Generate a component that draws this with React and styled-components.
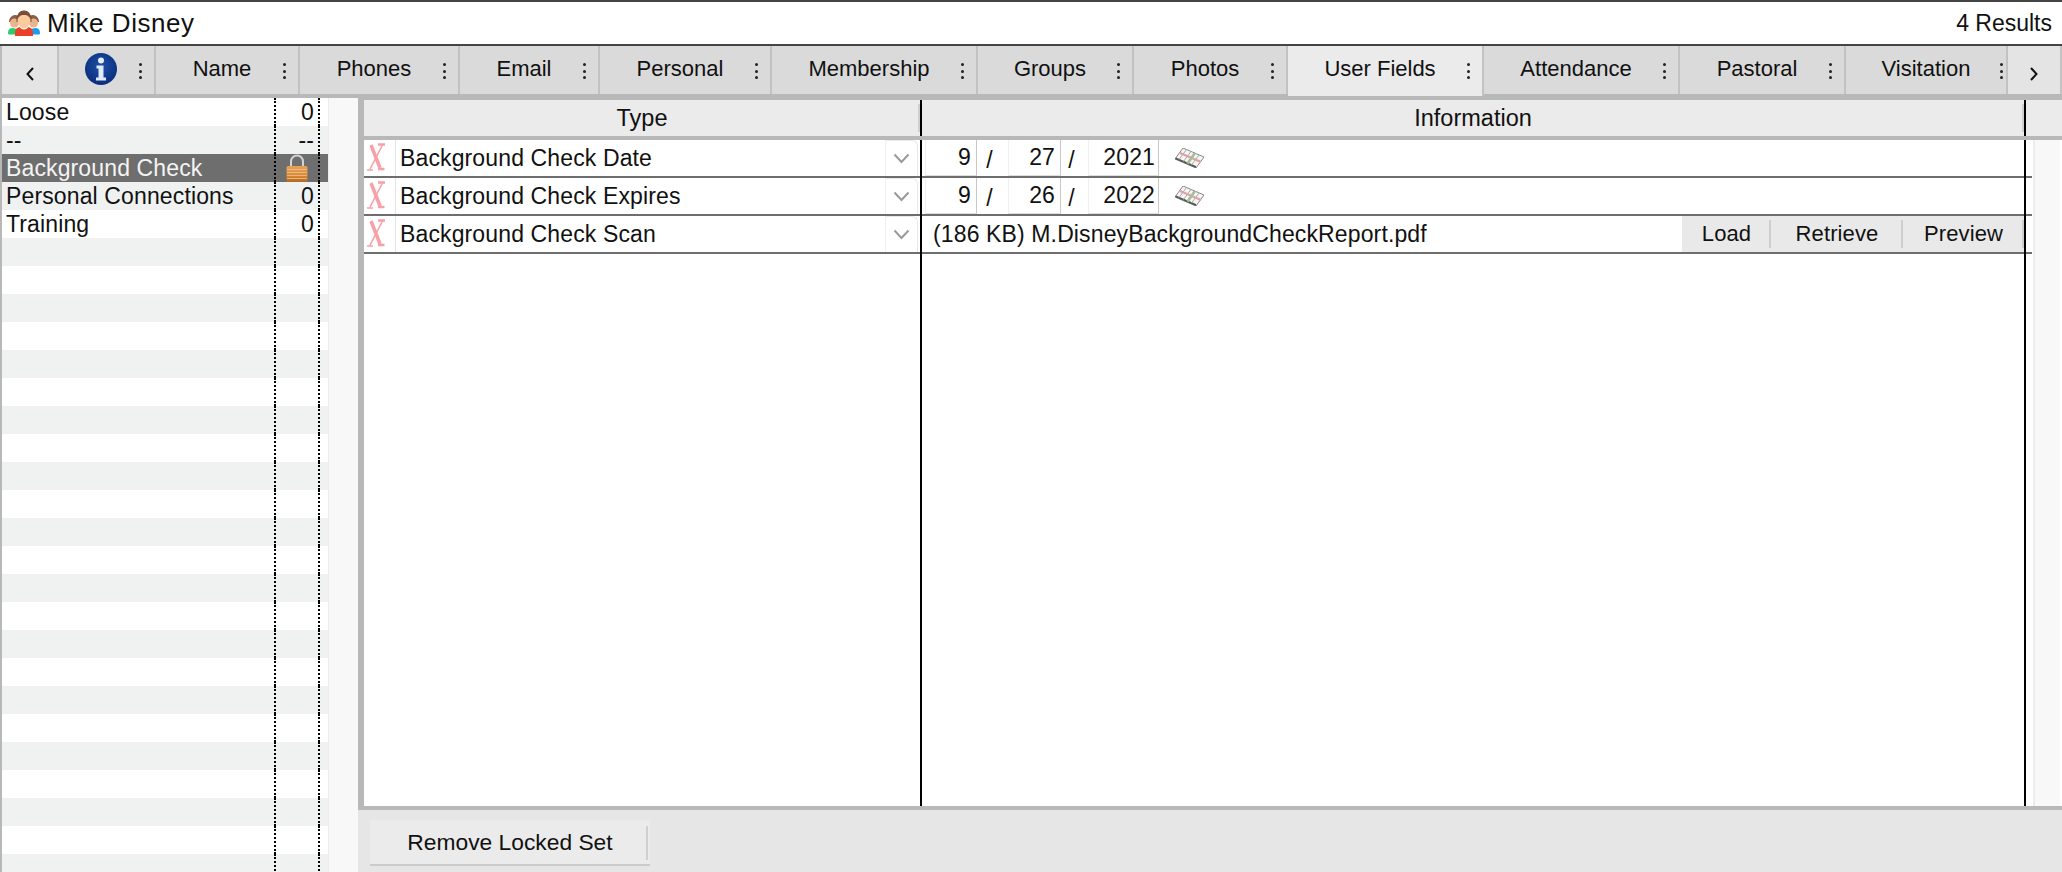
import React from 'react';
import styled, { createGlobalStyle } from 'styled-components';

const GlobalStyle = createGlobalStyle`
  html, body { margin: 0; padding: 0; background: #fff; }
  * { box-sizing: border-box; }
`;

const Page = styled.div`
  width: 100%;
  height: 100vh;
  display: flex;
  flex-direction: column;
  overflow: hidden;
  color: #111;
  font-family: 'Liberation Sans', Arial, sans-serif;
  font-size: 23px;
`;

// ===== title bar =====
const TitleBar = styled.header`
  height: 46px;
  flex: none;
  border-top: 2px solid #444;
  border-bottom: 2px solid #444;
  background: #fff;
  display: flex;
  align-items: center;
  padding: 0 10px 0 8px;
`;
const PersonName = styled.div`
  margin-left: 7px;
  flex: 1;
  font-size: 26px;
  letter-spacing: 0.55px;
`;
const ResultCount = styled.div`
  font-size: 23px;
`;

// ===== tabs =====
const TabBar = styled.nav`
  height: 48px;
  flex: none;
  display: flex;
  background: #d9d9d9;
  border-left: 2px solid #bbb;
  position: relative;
  z-index: 1;
`;
const Tab = styled.div`
  position: relative;
  flex: none;
  width: ${p => p.$w}px;
  height: ${p => (p.$active ? 50 : 48)}px;
  background: ${p => (p.$active ? '#ebebeb' : '#dadada')};
  border-right: 2px solid #c2c2c2;
  display: flex;
  align-items: center;
  justify-content: center;
  padding: 0 ${p => p.$shift}px ${p => (p.$active ? 5 : 3)}px 0;
  font-size: 22px;
`;
const ArrowTab = styled.div`
  flex: ${p => (p.$w ? 'none' : 1)};
  width: ${p => p.$w || 0}px;
  height: 48px;
  background: #e4e4e4;
  border-right: 2px solid #c2c2c2;
  display: flex;
  align-items: center;
  justify-content: center;
  padding-top: 8px;
`;
const Kebab = styled.span`
  position: absolute;
  right: ${p => p.$right}px;
  top: 17px;
  width: 3px;
  height: 16px;
  display: flex;
  flex-direction: column;
  justify-content: space-between;
  i {
    display: block;
    width: 3px;
    height: 3px;
    border-radius: 50%;
    background: #222;
  }
`;

// ===== main area =====
const Main = styled.main`
  flex: 1;
  min-height: 0;
  display: flex;
  background: #b8b8b8;
`;
const Sidebar = styled.aside`
  flex: none;
  width: 358px;
  margin-top: 4px;
  padding-left: 2px;
  display: flex;
  overflow: hidden;
`;
const SetList = styled.div`
  flex: none;
  width: 326px;
  overflow: hidden;
`;
const SideGutter = styled.div`
  flex: 1;
  background: #f8f8f8;
  border-left: 1px solid #ececec;
`;
const SetRow = styled.div`
  height: 28px;
  display: grid;
  grid-template-columns: 272px 46px 8px;
  align-items: center;
  font-size: 23px;
  letter-spacing: 0.13px;
  background: ${p => (p.$selected ? '#6e6e6e' : p.$odd ? '#f0f2f1' : '#fff')};
  color: ${p => (p.$selected ? '#f4f4f4' : '#111')};
`;
const SetName = styled.div`
  padding-left: 4px;
  white-space: nowrap;
`;
const SetCount = styled.div`
  height: 28px;
  line-height: 28px;
  padding-right: ${p => (p.$center ? 0 : 4)}px;
  text-align: right;
  color: #111;
  border-left: 2px dotted #000;
  border-right: 2px dotted #000;
  display: flex;
  align-items: center;
  justify-content: ${p => (p.$center ? 'center' : 'flex-end')};
`;

const Content = styled.section`
  flex: 1;
  min-width: 0;
  display: flex;
  flex-direction: column;
`;
const TableArea = styled.div`
  flex: 1;
  min-height: 0;
  margin: 6px 0 0 6px;
  display: flex;
  flex-direction: column;
`;

// columns shared by header, rows and the empty area below the rows
const HeaderRow = styled.div`
  height: 36px;
  flex: none;
  display: grid;
  grid-template-columns: 556px 2px 1102px 2px 1fr;
  background: #ebebeb;
  margin-bottom: 4px;
  font-size: 23.5px;
`;
const HeaderCell = styled.div`
  display: flex;
  align-items: center;
  justify-content: center;
  position: relative;
  &::after {
    content: '';
    position: absolute;
    right: 0;
    top: 4px;
    bottom: 4px;
    width: 2px;
    background: #cfcfcf;
  }
`;
const BlackRule = styled.div`
  background: #000;
`;
const Row = styled.div`
  height: 38px;
  flex: none;
  display: grid;
  grid-template-columns: 32px 524px 2px 1102px 2px 6px 1fr;
  grid-template-rows: 38px;
  background: #fff;
`;
const RestRow = styled.div`
  flex: 1;
  min-height: 0;
  display: grid;
  grid-template-columns: 556px 2px 1102px 2px 6px 1fr;
  background: #fff;
`;
const Lined = styled.div`
  position: relative;
  height: 38px;
  border-bottom: 2px solid #6e6e6e;
  min-width: 0;
`;
const DeleteCell = styled(Lined)`
  box-shadow: inset -1px 0 0 #e4e4e4;
  padding: 2px 0 0 2px;
  overflow: hidden;
`;
const TypeCell = styled(Lined)`
  display: flex;
  align-items: center;
  padding-left: 4px;
  font-size: 23px;
  letter-spacing: 0.13px;
`;
const TypeName = styled.div`
  flex: 1;
  padding-top: 1px;
`;
const SelectArrow = styled.div`
  width: 33px;
  height: 100%;
  margin-right: 2px;
  display: flex;
  align-items: center;
  justify-content: center;
  border-left: 1px solid #f0f0f0;
  border-right: 1px solid #e8e8e8;
  border-top: 1px solid #e8e8e8;
  border-top-right-radius: 6px;
`;
const InfoCell = styled(Lined)`
  display: flex;
  align-items: stretch;
  padding-left: ${p => p.$pad || 3}px;
  font-size: 23px;
  letter-spacing: 0.13px;
`;
const DateBox = styled.div`
  width: ${p => p.$w}px;
  height: 36px;
  flex: none;
  padding: 0 ${p => p.$inset || 5}px 0 0;
  display: flex;
  align-items: center;
  justify-content: flex-end;
  border-right: 1px solid #c8c8c8;
  border-bottom: 1px solid #dedede;
  border-left: 1px solid #f0f0f0;
`;
const DateSlash = styled.div`
  flex: none;
  width: ${p => p.$w}px;
  padding: 4px 6px 0 0;
  display: flex;
  align-items: center;
  justify-content: center;
`;
const CalendarSlot = styled.div`
  margin-left: 16px;
  display: flex;
  align-items: center;
`;
const FileName = styled.div`
  flex: 1;
  display: flex;
  align-items: center;
  padding-top: 1px;
  white-space: nowrap;
`;
const FileButtons = styled.div`
  flex: none;
  display: flex;
  background: #e9e9e9;
  align-items: stretch;
  font-size: 22px;
`;
const FileButton = styled.div`
  width: ${p => p.$w}px;
  display: flex;
  align-items: center;
  justify-content: center;
  position: relative;
  &::after {
    content: '';
    position: absolute;
    right: 0;
    top: 4px;
    bottom: 4px;
    width: 2px;
    background: #cfcfcf;
  }
`;
const ScrollGutter = styled.div`
  background: #f8f8f8;
  border-left: 2px solid #ececec;
  margin-right: 2px;
  margin-left: 1px;
`;

const Footer = styled.footer`
  height: 62px;
  flex: none;
  margin-top: 4px;
  background: #e6e6e6;
  padding: 10px 0 0 12px;
`;
const RemoveButton = styled.div`
  width: 280px;
  height: 46px;
  background: #ebebeb;
  border-bottom: 2px solid #cbcbcb;
  display: flex;
  align-items: center;
  justify-content: center;
  font-size: 22.8px;
  position: relative;
  &::after {
    content: '';
    position: absolute;
    right: 2px;
    top: 6px;
    bottom: 4px;
    width: 2px;
    background: #cfcfcf;
  }
`;

// ===== drawings =====
const PeopleIcon = () => (
  <svg width="32" height="26" viewBox="0 0 32 26">
    <path d="M1 12c0-4 3-7 6-7s5 2 5 7z" fill="#8a5f49" />
    <path d="M31 12c0-4-3-7-6-7s-5 2-5 7z" fill="#8a5f49" />
    <circle cx="6.500" cy="13" r="4.500" fill="#e8b58c" />
    <circle cx="25.500" cy="13" r="4.500" fill="#e8b58c" />
    <path d="M0 24c0-4 1-6 5-6l4 1v5.500H1.500C.5 24.500 0 24 0 24z" fill="#2ecc71" />
    <path d="M32 24c0-4-1-6-5-6l-4 1v5.500h7.500c1 0 1.500-.5 1.500-.5z" fill="#1e9bea" />
    <path d="M8.500 12C8 5 11 .5 16 .5S24 5 23.500 12z" fill="#7b4c37" />
    <path d="M9.500 10.500c0-3.500 3-5.500 6.500-5.500s6.500 2 6.500 5.500-3 8-6.500 8-6.500-4.500-6.500-8z" fill="#fbcb9d" />
    <path d="M7 26v-4c0-2.500 2-4.500 4.500-5 1 1.500 2.500 2.500 4.500 2.500s3.500-1 4.500-2.500c2.500.5 4.500 2.500 4.500 5v4z" fill="#e8402a" />
  </svg>
);

const InfoIcon = () => (
  <svg width="32" height="32" viewBox="0 0 32 32">
    <defs>
      <radialGradient id="infoFill" cx="50%" cy="40%" r="62%">
        <stop offset="0%" stopColor="#1f4fa8" />
        <stop offset="100%" stopColor="#0a2d7a" />
      </radialGradient>
    </defs>
    <circle cx="16" cy="16" r="16" fill="url(#infoFill)" />
    <circle cx="16" cy="7.500" r="3" fill="#e4eefa" />
    <path d="M11.500 12.500h7v12h2.500v3H11v-3h2.500v-9h-2z" fill="#dfeafa" />
  </svg>
);

const TabChevron = ({ flip }) => (
  <svg width="10" height="16" viewBox="0 0 10 16" style={flip ? { transform: 'scaleX(-1)' } : undefined}>
    <path d="M8 2 L2.500 8 L8 14" fill="none" stroke="#111" strokeWidth="2" />
  </svg>
);

const LockIcon = () => (
  <svg width="22" height="28" viewBox="0 0 22 28">
    <defs>
      <linearGradient id="lockBody" x1="0" y1="0" x2="0" y2="1">
        <stop offset="0%" stopColor="#e6a35c" />
        <stop offset="55%" stopColor="#d98c3c" />
        <stop offset="100%" stopColor="#b56820" />
      </linearGradient>
    </defs>
    <path d="M5 13V7.500a6 6 0 0 1 12 0V13" fill="none" stroke="#d4d4d4" strokeWidth="2" />
    <rect x="0.500" y="12" width="21" height="16" rx="1.500" fill="url(#lockBody)" />
    <path d="M1 15.500h20M1 18.500h20M1 21.500h20M1 24.500h20" stroke="#f3c48c" strokeWidth="1" opacity="0.75" />
  </svg>
);

const DeleteIcon = () => (
  <svg width="20" height="30" viewBox="0 0 20 30">
    <path d="M5 3 L14 26" fill="none" stroke="#f8a0a8" strokeWidth="3.500" />
    <path d="M12 27h6.500M12 2.500h7" fill="none" stroke="#f8a0a8" strokeWidth="2.500" />
    <path d="M16.500 3 L4 27 M1 28h6" fill="none" stroke="#f8a0a8" strokeWidth="1.600" />
  </svg>
);

const Chevron = () => (
  <svg width="17" height="11" viewBox="0 0 17 11">
    <path d="M1.500 1.500 L8.500 9 L15.500 1.500" fill="none" stroke="#9a9a9a" strokeWidth="2" />
  </svg>
);

const CalendarIcon = () => (
  <svg width="29" height="20" viewBox="0 0 29 20">
    <path d="M8 0 L29 9 L21 20 L0 11z" fill="#f5f5f3" stroke="#888" strokeWidth="1" />
    <path d="M0 11 L21 20 L21 18 L1 9.500z" fill="#555" />
    <path d="M11.500 1.500 L4 11.500 M16 3.500 L8.500 13.500 M24 7 L16.500 17" stroke="#aaa" strokeWidth="1" />
    <path d="M5 5 L26 14" stroke="#dca3a3" strokeWidth="2.200" />
    <path d="M20 5 L12.500 15.500" stroke="#a3bf98" strokeWidth="2.600" />
  </svg>
);

const tabs = [
  { label: 'Name', w: 144 },
  { label: 'Phones', w: 160 },
  { label: 'Email', w: 140 },
  { label: 'Personal', w: 172 },
  { label: 'Membership', w: 206 },
  { label: 'Groups', w: 156 },
  { label: 'Photos', w: 154 },
  { label: 'User Fields', w: 196, active: true },
  { label: 'Attendance', w: 196 },
  { label: 'Pastoral', w: 166 },
  { label: 'Visitation', w: 162, shift: 0, kebab: 3 },
];

const sets = [
  { name: 'Loose', count: '0' },
  { name: '--', count: '--' },
  { name: 'Background Check', locked: true },
  { name: 'Personal Connections', count: '0' },
  { name: 'Training', count: '0' },
];

const rows = [
  { type: 'Background Check Date', date: ['9', '27', '2021'] },
  { type: 'Background Check Expires', date: ['9', '26', '2022'] },
  { type: 'Background Check Scan', file: '(186 KB) M.DisneyBackgroundCheckReport.pdf' },
];

const KebabDots = ({ right = 12 }) => (
  <Kebab $right={right}>
    <i />
    <i />
    <i />
  </Kebab>
);

function RowShell({ children, type }) {
  return (
    <Row>
      <DeleteCell>
        <DeleteIcon />
      </DeleteCell>
      <TypeCell>
        <TypeName>{type}</TypeName>
        <SelectArrow>
          <Chevron />
        </SelectArrow>
      </TypeCell>
      <BlackRule />
      {children}
      <BlackRule />
      <Lined />
      <ScrollGutter />
    </Row>
  );
}

export default function App() {
  const listRows = Array.from({ length: 28 }, (_, i) => sets[i] || { name: '', count: '' });

  return (
    <Page>
      <GlobalStyle />
      <TitleBar>
        <PeopleIcon />
        <PersonName>Mike Disney</PersonName>
        <ResultCount>4 Results</ResultCount>
      </TitleBar>

      <TabBar>
        <ArrowTab $w={57}>
          <TabChevron />
        </ArrowTab>
        <Tab $w={97} $shift={12}>
          <InfoIcon />
          <KebabDots />
        </Tab>
        {tabs.map(t => (
          <Tab key={t.label} $w={t.w} $active={t.active} $shift={t.shift ?? 10}>
            {t.label}
            <KebabDots right={t.kebab} />
          </Tab>
        ))}
        <ArrowTab>
          <TabChevron flip />
        </ArrowTab>
      </TabBar>

      <Main>
        <Sidebar>
          <SetList>
            {listRows.map((s, i) => (
              <SetRow key={i} $odd={i % 2 === 1} $selected={s.locked}>
                <SetName>{s.name}</SetName>
                <SetCount $center={s.locked}>{s.locked ? <LockIcon /> : s.count}</SetCount>
              </SetRow>
            ))}
          </SetList>
          <SideGutter />
        </Sidebar>

        <Content>
          <TableArea>
            <HeaderRow>
              <HeaderCell>Type</HeaderCell>
              <BlackRule />
              <HeaderCell>Information</HeaderCell>
              <BlackRule />
            </HeaderRow>
            {rows.map(r => (
              <RowShell key={r.type} type={r.type}>
                {r.date ? (
                  <InfoCell>
                    <DateBox $w={52}>{r.date[0]}</DateBox>
                    <DateSlash $w={31}>/</DateSlash>
                    <DateBox $w={53}>{r.date[1]}</DateBox>
                    <DateSlash $w={27}>/</DateSlash>
                    <DateBox $w={71} $inset={3}>{r.date[2]}</DateBox>
                    <CalendarSlot>
                      <CalendarIcon />
                    </CalendarSlot>
                  </InfoCell>
                ) : (
                  <InfoCell $pad={11}>
                    <FileName>{r.file}</FileName>
                    <FileButtons>
                      <FileButton $w={89}>Load</FileButton>
                      <FileButton $w={132}>Retrieve</FileButton>
                      <FileButton $w={121}>Preview</FileButton>
                    </FileButtons>
                  </InfoCell>
                )}
              </RowShell>
            ))}
            <RestRow>
              <div />
              <BlackRule />
              <div />
              <BlackRule />
              <div />
              <ScrollGutter />
            </RestRow>
          </TableArea>
          <Footer>
            <RemoveButton>Remove Locked Set</RemoveButton>
          </Footer>
        </Content>
      </Main>
    </Page>
  );
}
